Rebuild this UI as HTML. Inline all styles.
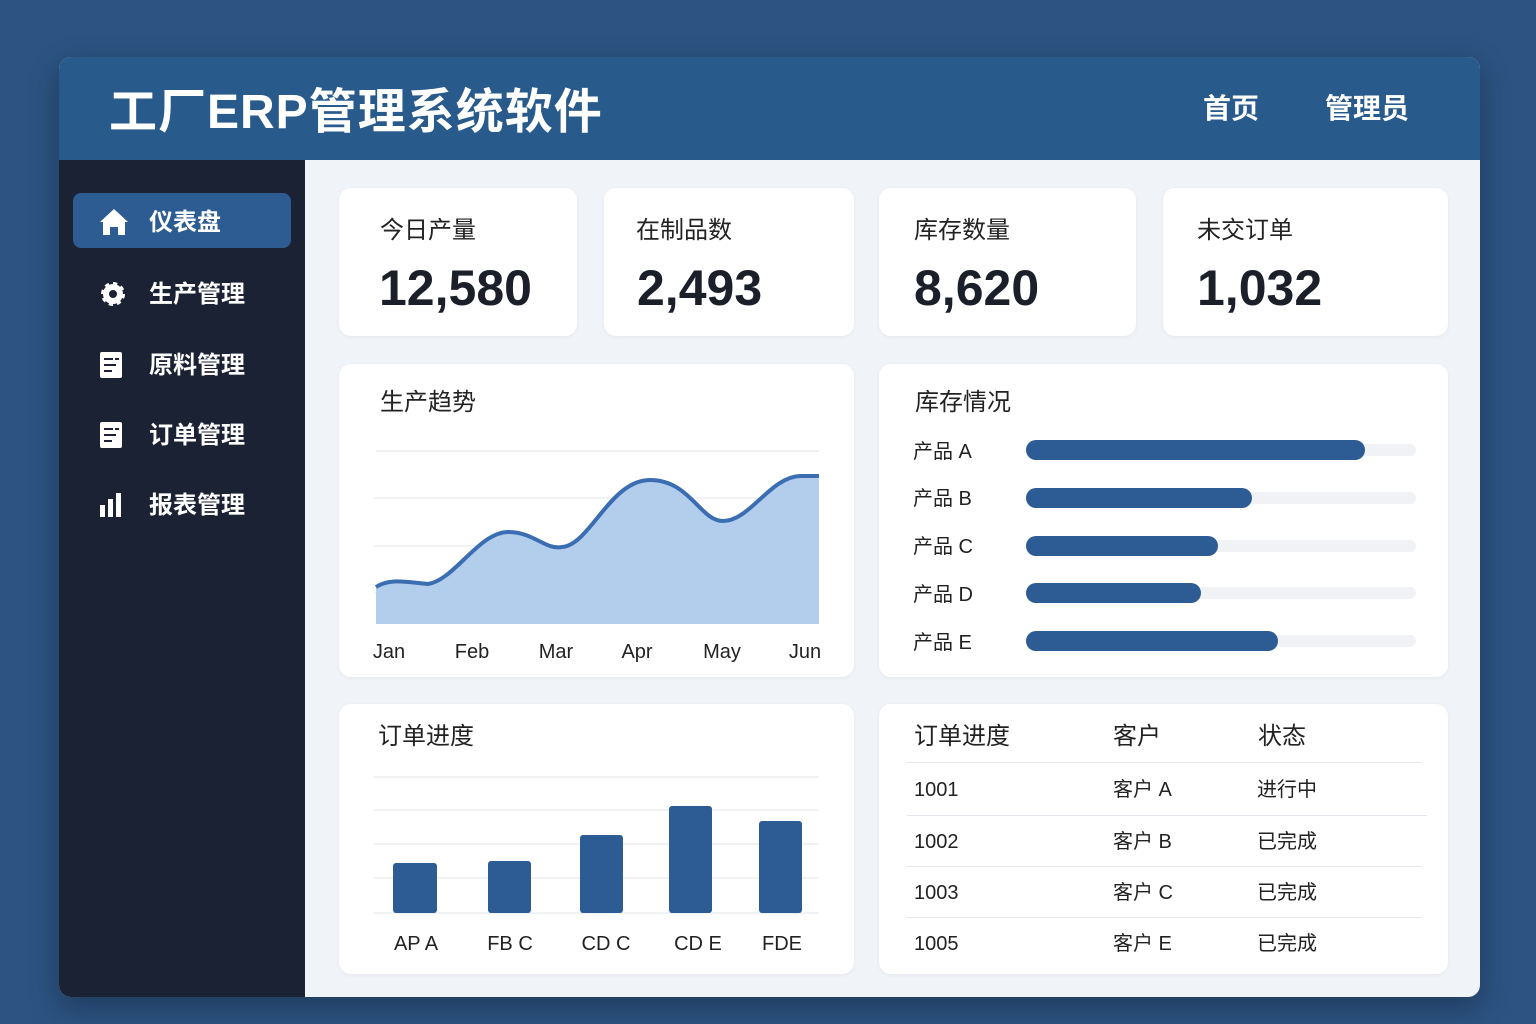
<!DOCTYPE html>
<html><head><meta charset="utf-8"><style>
*{margin:0;padding:0;box-sizing:border-box}
body{width:1536px;height:1024px;background:#2c5382;font-family:"Liberation Sans","Noto Sans CJK SC",sans-serif;position:relative;overflow:hidden}
.win{position:absolute;left:59px;top:57px;width:1421px;height:940px;border-radius:12px;overflow:hidden;background:#f0f3f8;box-shadow:0 10px 30px rgba(0,0,0,.3)}
.hdr{position:absolute;left:0;top:0;width:100%;height:103px;background:#285a8b}
.hdr h1{position:absolute;left:50px;top:26px;font-size:48px;line-height:60px;color:#fff;font-weight:bold;letter-spacing:1px}
.hdr .n{position:absolute;top:35px;font-size:28px;line-height:34px;color:#fff;font-weight:bold}
.side{position:absolute;left:0;top:103px;width:246px;height:837px;background:#1a2233}
.it{position:absolute;left:14px;width:218px;height:55px;color:#fff;font-size:24px;font-weight:bold}
.it span{position:absolute;left:76px;top:15px;line-height:30px}
.it svg{position:absolute;left:26px;top:15px}
.act{background:#2c5c92;border-radius:8px}
.card{position:absolute;background:#fff;border-radius:12px;box-shadow:0 1px 4px rgba(0,0,0,.05)}
.lbl{position:absolute;left:41px;top:28px;font-size:24px;line-height:30px;color:#222}
.num{position:absolute;left:40px;top:70px;font-size:50px;line-height:60px;font-weight:bold;color:#1a1f2a}
.t{position:absolute;font-size:20px;line-height:24px;color:#222}
.bar{position:absolute;height:20px;border-radius:10px;background:#2d5b93}
.trk{position:absolute;height:12px;border-radius:6px;background:#f0f2f5}
</style></head><body>
<div class="win">
<div class="hdr"><h1>工厂ERP管理系统软件</h1><div class="n" style="left:1144px">首页</div><div class="n" style="left:1266px">管理员</div></div>
<div class="side">
<div class="it act" style="top:33px"><svg width="30" height="28" viewBox="0 0 30 28"><path d="M15 1 L29 14 L26 14 L26 27 L19 27 L19 19 L11 19 L11 27 L4 27 L4 14 L1 14Z" fill="#fff"/></svg><span>仪表盘</span></div>
<div class="it" style="top:105px"><svg width="28" height="28" viewBox="0 0 28 28"><circle cx="14" cy="14" r="10" fill="#fff" stroke="#fff" stroke-width="4" stroke-dasharray="4 3.8"/><circle cx="14" cy="14" r="4" fill="#1a2233"/></svg><span>生产管理</span></div>
<div class="it" style="top:176px"><svg width="26" height="28" viewBox="0 0 26 28"><rect x="1" y="1" width="22" height="26" rx="2" fill="#fff"/><path d="M5 8h9M5 14h12M5 20h8M16 8h4" stroke="#1a2233" stroke-width="2"/></svg><span>原料管理</span></div>
<div class="it" style="top:246px"><svg width="26" height="28" viewBox="0 0 26 28"><rect x="1" y="1" width="22" height="26" rx="2" fill="#fff"/><path d="M5 8h9M5 14h12M5 20h8M16 8h4" stroke="#1a2233" stroke-width="2"/></svg><span>订单管理</span></div>
<div class="it" style="top:316px"><svg width="26" height="28" viewBox="0 0 26 28"><rect x="1" y="14" width="5" height="12" fill="#fff"/><rect x="9" y="8" width="5" height="18" fill="#fff"/><rect x="17" y="2" width="5" height="24" fill="#fff"/></svg><span>报表管理</span></div>
</div>
<div class="card" style="left:280px;top:131px;width:238px;height:148px"><div class="lbl">今日产量</div><div class="num">12,580</div></div>
<div class="card" style="left:545px;top:131px;width:250px;height:148px"><div class="lbl" style="left:32px">在制品数</div><div class="num" style="left:33px">2,493</div></div>
<div class="card" style="left:820px;top:131px;width:257px;height:148px"><div class="lbl" style="left:35px">库存数量</div><div class="num" style="left:35px">8,620</div></div>
<div class="card" style="left:1104px;top:131px;width:285px;height:148px"><div class="lbl" style="left:34px">未交订单</div><div class="num" style="left:34px">1,032</div></div>
<div class="card" style="left:280px;top:307px;width:515px;height:313px"><div class="lbl" style="top:24px">生产趋势</div></div>
<svg style="position:absolute;left:0;top:0" width="1421" height="940" viewBox="59 57 1421 940">
<g stroke="#e3e6ea" stroke-width="1"><line x1="376" y1="451" x2="819" y2="451"/><line x1="374" y1="498" x2="819" y2="498"/><line x1="374" y1="546" x2="819" y2="546"/><line x1="374" y1="593" x2="819" y2="593"/></g>
<path d="M376 587 C390 578 405 582 428 584 C455 580 480 530 510 532 C535 533 545 550 562 547 C590 545 610 480 650 480 C690 480 700 521 723 521 C750 521 770 477 800 476 L819 476 L819 624 L376 624Z" fill="#b3cdec"/>
<path d="M376 587 C390 578 405 582 428 584 C455 580 480 530 510 532 C535 533 545 550 562 547 C590 545 610 480 650 480 C690 480 700 521 723 521 C750 521 770 477 800 476 L819 476" fill="none" stroke="#3a6db2" stroke-width="4"/>
<g font-family="Liberation Sans" font-size="20" fill="#222" text-anchor="middle"><text x="389" y="658">Jan</text><text x="472" y="658">Feb</text><text x="556" y="658">Mar</text><text x="637" y="658">Apr</text><text x="722" y="658">May</text><text x="805" y="658">Jun</text></g>
</svg>
<div class="card" style="left:820px;top:307px;width:569px;height:313px"><div class="lbl" style="left:36px;top:24px">库存情况</div>
<div class="t" style="left:34px;top:76px">产品 A</div><div class="t" style="left:34px;top:123px">产品 B</div><div class="t" style="left:34px;top:171px">产品 C</div><div class="t" style="left:34px;top:219px">产品 D</div><div class="t" style="left:34px;top:267px">产品 E</div>
<div class="trk" style="left:147px;top:80px;width:390px"></div><div class="bar" style="left:147px;top:76px;width:339px"></div>
<div class="trk" style="left:147px;top:128px;width:390px"></div><div class="bar" style="left:147px;top:124px;width:226px"></div>
<div class="trk" style="left:147px;top:176px;width:390px"></div><div class="bar" style="left:147px;top:172px;width:192px"></div>
<div class="trk" style="left:147px;top:223px;width:390px"></div><div class="bar" style="left:147px;top:219px;width:175px"></div>
<div class="trk" style="left:147px;top:271px;width:390px"></div><div class="bar" style="left:147px;top:267px;width:252px"></div>
</div>
<div class="card" style="left:280px;top:647px;width:515px;height:270px"><div class="lbl" style="left:39px;top:18px">订单进度</div></div>
<svg style="position:absolute;left:0;top:0" width="1421" height="940" viewBox="59 57 1421 940">
<g stroke="#e3e6ea"><line x1="374" y1="777" x2="819" y2="777"/><line x1="374" y1="810" x2="819" y2="810"/><line x1="374" y1="844" x2="819" y2="844"/><line x1="374" y1="878" x2="819" y2="878"/><line x1="374" y1="913" x2="819" y2="913"/></g>
<g fill="#2d5b93"><rect x="393" y="863" width="44" height="50" rx="3"/><rect x="488" y="861" width="43" height="52" rx="3"/><rect x="580" y="835" width="43" height="78" rx="3"/><rect x="669" y="806" width="43" height="107" rx="3"/><rect x="759" y="821" width="43" height="92" rx="3"/></g>
<g font-family="Liberation Sans" font-size="20" fill="#222" text-anchor="middle"><text x="416" y="950">AP A</text><text x="510" y="950">FB C</text><text x="606" y="950">CD C</text><text x="698" y="950">CD E</text><text x="782" y="950">FDE</text></g>
</svg>
<div class="card" style="left:820px;top:647px;width:569px;height:270px">
<div class="t" style="left:35px;top:18px;font-size:24px;line-height:30px">订单进度</div><div class="t" style="left:234px;top:18px;font-size:24px;line-height:30px">客户</div><div class="t" style="left:379px;top:18px;font-size:24px;line-height:30px">状态</div>
<div style="position:absolute;left:28px;top:58px;width:514px;border-top:1px solid #e3e6ea"></div>
<div class="t" style="left:35px;top:74px">1001</div><div class="t" style="left:234px;top:74px">客户 A</div><div class="t" style="left:378px;top:74px">进行中</div>
<div style="position:absolute;left:28px;top:111px;width:520px;border-top:1px solid #e3e6ea"></div>
<div class="t" style="left:35px;top:126px">1002</div><div class="t" style="left:234px;top:126px">客户 B</div><div class="t" style="left:378px;top:126px">已完成</div>
<div style="position:absolute;left:28px;top:162px;width:514px;border-top:1px solid #e3e6ea"></div>
<div class="t" style="left:35px;top:177px">1003</div><div class="t" style="left:234px;top:177px">客户 C</div><div class="t" style="left:378px;top:177px">已完成</div>
<div style="position:absolute;left:28px;top:213px;width:514px;border-top:1px solid #e3e6ea"></div>
<div class="t" style="left:35px;top:228px">1005</div><div class="t" style="left:234px;top:228px">客户 E</div><div class="t" style="left:378px;top:228px">已完成</div>
</div>
</div>
</body></html>
